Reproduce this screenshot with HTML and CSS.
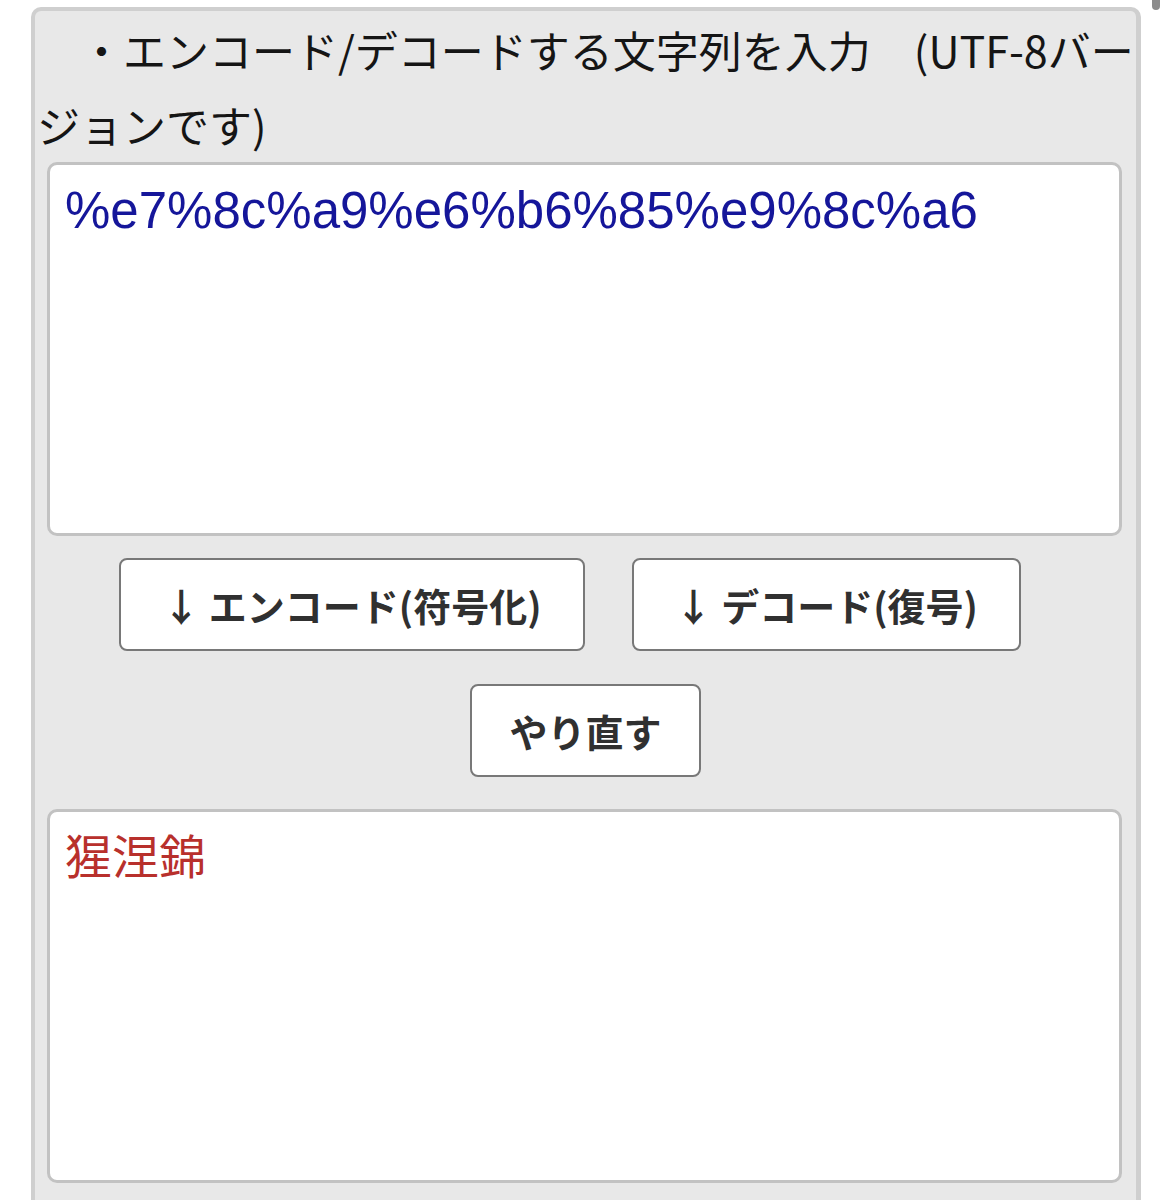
FILE: index.html
```html
<!DOCTYPE html>
<html lang="ja">
<head>
<meta charset="utf-8">
<title>URLエンコード/デコード</title>
<link rel="stylesheet" href="styles.css">
</head>
<body>
<div class="scroll-thumb"></div>
<div class="panel">
  <p class="label">　・エンコード/デコードする文字列を入力　(UTF-8バージョンです)</p>
  <textarea class="field field-encoded" spellcheck="false">%e7%8c%a9%e6%b6%85%e9%8c%a6</textarea>
  <div class="btn-row btn-row-main">
    <button class="btn" type="button">↓ エンコード(符号化)</button>
    <button class="btn" type="button">↓ デコード(復号)</button>
  </div>
  <div class="btn-row">
    <button class="btn btn-reset" type="button">やり直す</button>
  </div>
  <textarea class="field field-decoded" spellcheck="false">猩涅錦</textarea>
</div>
</body>
</html>
```

FILE: styles.css
```css
html, body {
  margin: 0;
  padding: 0;
  background: #ffffff;
}

body {
  position: relative;
  font-family: "Noto Sans CJK JP", "Liberation Sans", sans-serif;
  color: #111111;
}

.scroll-thumb {
  position: absolute;
  top: -6px;
  left: 1152px;
  width: 8px;
  height: 16px;
  border-radius: 4px;
  background: #8c8c8c;
}

.panel {
  margin: 7px 0 0 31px;
  width: 1101px;
  border: 4px solid #cfcfcf;
  border-right-width: 5px;
  border-bottom: none;
  border-radius: 10px 10px 0 0;
  background: #e8e8e8;
  padding: 1px 0 40px;
  display: flex;
  flex-direction: column;
}

.label {
  margin: 0;
  padding: 0 0 0 2px;
  font-size: 43px;
  line-height: 75px;
  font-weight: 400;
  color: #151515;
}

.field {
  display: block;
  box-sizing: border-box;
  margin: 0 14px 0 12px;
  width: 1075px;
  height: 374px;
  border: 3px solid #c2c2c2;
  border-radius: 10px;
  background: #ffffff;
  padding: 17px 15px 14px;
  font-family: "Liberation Sans", "Noto Sans CJK JP", sans-serif;
  font-size: 51px;
  line-height: 1.15;
  resize: none;
  outline: none;
  overflow: hidden;
}

.field-encoded {
  color: #15169a;
}

.field-decoded {
  margin-top: 32px;
  color: #b8302c;
  font-family: "Noto Sans CJK JP", sans-serif;
  font-size: 47px;
  padding-top: 15px;
}

.btn-row {
  display: flex;
  justify-content: center;
  gap: 47px;
  margin-top: 33px;
}

.btn-row-main {
  margin-top: 22px;
  padding-right: 31px;
}

.btn {
  height: 93px;
  padding: 0 41px;
  border: 2px solid #787878;
  border-radius: 8px;
  background: #ffffff;
  font-family: "Noto Sans CJK JP", sans-serif;
  font-weight: 700;
  font-size: 38px;
  color: #303030;
  cursor: pointer;
}

.btn-reset {
  padding: 0 37px;
}
```
